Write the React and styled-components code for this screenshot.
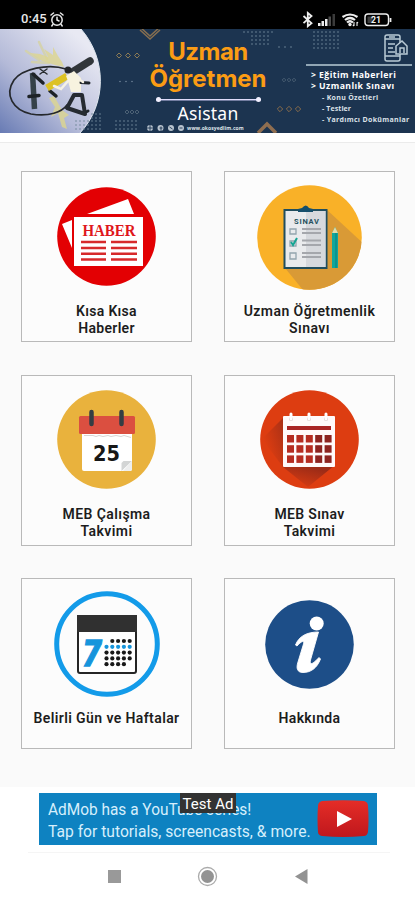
import React from "react";
import styled, { createGlobalStyle } from "styled-components";

const GlobalStyle = createGlobalStyle`
  * { box-sizing: border-box; }
  body { margin: 0; background: #fff; font-family: Roboto, "Noto Sans", sans-serif; }
  svg { display: block; }
`;

const Screen = styled.div`
  width: 415px;
  height: 900px;
  display: flex;
  flex-direction: column;
  background: #fff;
  overflow: hidden;
`;

const StatusBar = styled.header`
  height: 29px;
  flex: none;
  display: flex;
  justify-content: space-between;
  padding: 9px 22px 0 21px;
  background: #000;
  color: #e8e8e8;
`;

const StatusGroup = styled.div`
  display: flex;
  height: 20px;
  align-items: center;
  gap: ${(p) => p.$gap}px;
`;

const Clock = styled.span`
  font-size: 13px;
  line-height: 20px;
  font-weight: 500;
  letter-spacing: 0.05px;
`;

const Banner = styled.section`
  position: relative;
  height: 104px;
  flex: none;
  display: grid;
  grid-template-columns: 148px 120px 1fr;
  background: #1c3450;
  color: #fff;
  overflow: hidden;
`;

const BannerArt = styled.svg`
  position: absolute;
  inset: 0;
`;

const BrandColumn = styled.div`
  position: relative;
  grid-column: 2;
  display: flex;
  flex-direction: column;
  align-items: center;
  padding-top: 9px;
  font-family: Inter, sans-serif;
`;

const BrandLine = styled.div`
  font-size: 24px;
  line-height: 27px;
  font-weight: 700;
  color: #fb9c14;
  white-space: nowrap;
  letter-spacing: ${(p) => p.$spacing}px;
`;

const BrandRule = styled.div`
  display: flex;
  width: 105px;
  height: 5px;
  margin-top: 5px;
  align-items: center;
  justify-content: space-between;
  background: linear-gradient(#e8e5ff, #c9c6f0) center / 100% 1.5px no-repeat;
  &::before, &::after {
    content: "";
    width: 5px;
    height: 5px;
    border-radius: 50%;
    background: #f2f0ff;
  }
`;

const BrandSub = styled.div`
  margin-top: 1px;
  font: 400 17.5px/20px "Noto Sans", sans-serif;
  letter-spacing: 0.2px;
`;

const SiteRow = styled.div`
  display: flex;
  align-self: flex-start;
  align-items: center;
  gap: 3px;
  height: 8px;
  margin-top: 1px;
  margin-left: -2px;
  font: 700 5px/8px "Open Sans", sans-serif;
  color: #dfe5ea;
`;

const SiteName = styled.span`
  white-space: nowrap;
  letter-spacing: 0.1px;
`;

const Topics = styled.div`
  position: relative;
  display: flex;
  flex-direction: column;
  margin-left: 38px;
  margin-top: 34.5px;
  padding: 4px 0 0 5px;
  border-top: 2px solid #91a6b5;
  margin-right: 3px;
  height: 68px;
  font-family: "Open Sans", sans-serif;
  font-weight: 700;
  white-space: nowrap;
`;

const Topic = styled.div`
  font-size: 8.7px;
  line-height: 11px;
  letter-spacing: ${(p) => p.$spacing}px;
`;

const SubTopic = styled.div`
  font-size: 7px;
  line-height: 11px;
  padding-left: 11px;
  letter-spacing: ${(p) => p.$spacing}px;
  color: #dce2e8;
`;

const Divider = styled.div`
  height: 10px;
  flex: none;
  border-bottom: 1.5px solid #ebebeb;
  background: #fff;
`;

const Menu = styled.main`
  flex: none;
  height: 644px;
  display: grid;
  grid-template-columns: 171px 171px;
  grid-auto-rows: 171px;
  gap: 32.5px 32px;
  padding: 28px 0 0 21px;
  background: #fafafa;
`;

const Card = styled.article`
  display: flex;
  flex-direction: column;
  align-items: center;
  border: 1px solid #b9b9b9;
  background: #fcfcfc;
  svg { margin-top: ${(p) => p.$iconTop}px; }
`;

const CardLabel = styled.h2`
  margin: ${(p) => p.$top}px 0 0;
  font-size: 14px;
  line-height: 17px;
  font-weight: 600;
  letter-spacing: ${(p) => p.$spacing}px;
  text-align: center;
  white-space: pre-line;
  color: #1d1d1d;
`;

const AdArea = styled.aside`
  height: 65px;
  flex: none;
  display: flex;
  justify-content: center;
  padding: 6px 0 0 1px;
  background: #fff;
`;

const Ad = styled.div`
  position: relative;
  display: flex;
  justify-content: space-between;
  width: 338px;
  height: 52px;
  padding: 7px 8px 0 9px;
  background: #0e82c1;
`;

const AdText = styled.div`
  width: 263px;
  margin-top: -2.5px;
  font-family: Roboto, sans-serif;
  font-size: 17px;
  line-height: 22.5px;
  color: #d6effc;
  white-space: nowrap;
`;

const AdLine = styled.div`
  transform: scaleX(${(p) => p.$stretch});
  transform-origin: left;
`;

const TestTag = styled.span`
  position: absolute;
  left: 141px;
  top: 0;
  width: 56px;
  height: 20px;
  background: #333;
  color: #fff;
  font-size: 15px;
  line-height: 22px;
  text-align: center;
  white-space: nowrap;
`;

const NavBar = styled.nav`
  height: 49px;
  flex: none;
  display: grid;
  grid-template-columns: 13px 21px 13px;
  column-gap: 76.5px;
  justify-content: start;
  align-items: center;
  padding-left: 107.5px;
  margin: 0;
  background: linear-gradient(#f5f5f5, #f5f5f5) 28px 0 / 362px 1px no-repeat #fff;
`;

function AlarmIcon() {
  return (
    <svg width="14" height="15" viewBox="0 0 14 15" fill="none" stroke="#e8e8e8" strokeWidth="1.5" strokeLinecap="round">
      <circle cx="7" cy="8" r="5.2" />
      <path d="M7 5.200V8l2 1M1 3l2.500-2M13 3l-2.500-2M2.800 12.500l-1 1.500M11.200 12.500l1 1.500" />
    </svg>
  );
}

function StatusIcons() {
  return (
    <svg width="91" height="17" viewBox="302 10 91 17" fill="none" stroke="#eee" strokeWidth="1.4">
      <path strokeWidth="1.800" d="M303.500 15l8 7.200-3.700 3V12l3.700 3-8 7.200" />
      <g stroke="none" fill="#eee">
        <rect x="318" y="22" width="2.500" height="3" />
        <rect x="321.500" y="20" width="2.500" height="5" />
        <rect x="325" y="18" width="2.500" height="7" />
        <rect x="328.500" y="15.500" width="2.500" height="9.500" fill="#4c4c4c" />
        <rect x="332.500" y="13" width="2.500" height="12" fill="#3b3b3b" />
        <circle cx="350" cy="23.500" r="1.700" />
      </g>
      <path strokeWidth="2.200" d="M342.500 16q7.500-5 15 0M345 19q5-4 10 0M347 21.500q3-2.500 6 0" />
      <path strokeWidth="1.100" d="M354 21v4M352.800 23.800l1.200 1.200M357 25v-4M358 22.200l-1-1.200" />
      <rect x="365" y="13" width="23.500" height="11.500" rx="3" />
      <rect x="367.500" y="15.500" width="5" height="6.500" fill="#3d3d3d" stroke="none" />
      <path d="M390.500 17v4" strokeWidth="1.800" />
      <text x="371" y="22.200" fill="#f4f4f4" stroke="none" fontSize="9" fontWeight="700" textLength="10" lengthAdjust="spacingAndGlyphs">21</text>
    </svg>
  );
}

function Dots({ x, y, cols, rows, dx = 4, dy = 4, color = "#71869a" }) {
  return Array.from({ length: cols * rows }, (_, i) => (
    <circle key={i} cx={x + (i % cols) * dx} cy={y + Math.floor(i / cols) * dy} r="0.8" fill={color} />
  ));
}

function Diamonds({ x, y, step, size, color }) {
  return [0, 1, 2].map((i) => (
    <path key={i} d={`M${x + i * step} ${y - size}l${size} ${size}l${-size} ${size}l${-size} ${-size}z`} fill="none" stroke={color} strokeWidth="0.9" />
  ));
}

function BannerDrawing() {
  return (
    <BannerArt width="415" height="104" viewBox="0 29 415 104">
      <defs>
        <linearGradient id="moon" x1="0" y1="1" x2="0.8" y2="0.1">
          <stop offset="0" stopColor="#687bb4" />
          <stop offset="0.45" stopColor="#b4bad8" />
          <stop offset="1" stopColor="#e8e9f3" />
        </linearGradient>
      </defs>
      <path d="M0 29H81C107 59 107 104 80 133H0z" fill="url(#moon)" />
      <path d="M81 29C107 59 107 104 80 133" fill="none" stroke="#e0e7ef" strokeWidth="1" />
      <g fill="none" strokeLinecap="round">
        <path stroke="#d4d2a3" strokeWidth="2.500" opacity="0.8" d="M26 51l13 9M39 42l8 17M32 62l17 1" />
        <path fill="#ddd68e" opacity="0.8" d="M53 47l5 9 4 6 2 5-9-2-13-4-12-8 10 1 8 3-4-8 9 6zM49 98l6 9-4 10 7-4 4 14 5 2-3-11 5-3-7-5-8-14z" />
        <path stroke="#25282c" strokeWidth="1.700" d="M66 69C48 63 22 69 14 80C4 95 13 110 31 114C49 117 62 112 67 105" />
        <path stroke="#354149" strokeWidth="5.500" strokeLinecap="butt" d="M32.500 73l2 36" />
        <path stroke="#1d2227" strokeWidth="3.500" d="M33 74l10 9M50 91l6 5M29 96.500l10-1" />
        <path stroke="#272b2f" strokeWidth="1.500" d="M40 69l7 5M47 69l-7 5" />
        <path stroke="#ddc224" strokeWidth="7" strokeLinecap="butt" d="M47 88l20-12" />
        <path stroke="#31363a" strokeWidth="7.500" d="M74 71l16-10" />
        <path fill="#f7f3df" d="M66 76l8-5 7 7 0 14h-10l-3-11z" />
        <circle cx="68" cy="70" r="3.500" fill="#24272a" stroke="none" />
        <path stroke="#262b31" strokeWidth="4" strokeLinejoin="round" d="M74 95l-7 13 18 6-3-19z" />
        <path stroke="#20252b" strokeWidth="3" d="M81 82.500l8 .500M87 111.500l1-.500" />
        <path stroke="#f6f2e4" strokeWidth="2.500" d="M54 86l7 3 7-8M77 78l6 4" />
      </g>
      <path d="M140 30l10 9 10-9M140 27l10 9 10-9" fill="none" stroke="#876f50" strokeWidth="1.500" />
      <path d="M258 133l9-9 9 9" fill="none" stroke="#8f6e50" strokeWidth="3.500" />
      <Diamonds x={119} y={55.500} step={9} size={2.500} color="#9b8355" />
      <Diamonds x={280} y={109} step={9} size={2.700} color="#92714a" />
      <Diamonds x={127} y={112} step={5} size={2} color="#526779" />
      <Diamonds x={284} y={80} step={5} size={1.800} color="#4c6175" />
      <Dots x={120} y={81.500} cols={3} rows={1} dx={6} />
      <Dots x={279} y={47} cols={3} rows={1} dx={6} />
      <Dots x={244} y={32} cols={8} rows={1} />
      <Dots x={252} y={36} cols={5} rows={3} />
      <Dots x={314} y={32} cols={7} rows={5} />
      <Dots x={116} y={121} cols={6} rows={3} />
      <Dots x={76} y={121} cols={7} rows={3} />
      <Dots x={92} y={114} cols={3} rows={2} />
      <g fill="none" stroke="#b9cad5" strokeWidth="1.500">
        <rect x="385" y="35" width="15" height="26" rx="2" />
        <path d="M385 39h15M385 56h15M388 44h7M388 48h5M388 52h7M389 37h6" />
        <path fill="#1c3450" d="M396 46l6-5 5 5v8h-11z" />
        <path d="M400 53v-5h4v5" />
      </g>
    </BannerArt>
  );
}

function SocialIcons() {
  return (
    <svg width="38" height="8" viewBox="0 0 38 8" fill="#b9c4cf">
      {[4, 14.5, 25, 35].map((x) => <circle key={x} cx={x} cy="4" r="3" />)}
      <path d="M4 1v6M1 4h6M15 2.500v4.500M13.500 4h3M23.500 3l3 2M33.500 4h3" stroke="#1c3450" strokeWidth="0.9" />
    </svg>
  );
}

function NewsIcon() {
  return (
    <svg width="99" height="99" viewBox="0 0 99 99">
      <circle cx="49.500" cy="49.500" r="49.300" fill="#e30003" />
      <path fill="#fff" d="M30 27L71 12l6 15zM5 37l10-4v28z" />
      <rect x="17" y="30" width="69" height="49" fill="#fff" />
      <text x="25.500" y="48.500" fill="#df171c" fontFamily="Liberation Serif, serif" fontSize="16" fontWeight="700" textLength="53" lengthAdjust="spacingAndGlyphs">HABER</text>
      <path d="M24 55h25M54 55h26M24 61h25M54 61h26M24 66.700h25M54 66.700h26M24 72.500h25M54 72.500h26" stroke="#d72a2b" strokeWidth="2.500" />
    </svg>
  );
}

function ExamIcon() {
  return (
    <svg width="105" height="105" viewBox="0 0 105 105">
      <defs><clipPath id="exam"><circle cx="52.500" cy="52.500" r="52.300" /></clipPath></defs>
      <circle cx="52.500" cy="52.500" r="52.300" fill="#f9b128" />
      <path clipPath="url(#exam)" d="M69 24l40 37v44H46L28 83z" fill="#d99a36" />
      <rect x="27.500" y="25" width="42" height="58" fill="#e9ebed" stroke="#214e5e" strokeWidth="2" />
      <path d="M49 26h19.500v56H49z" fill="#d6d9dd" />
      <path d="M41 27v-3l4-1q4-5 7 0l4 1v3z" fill="#154f6c" />
      <text x="37" y="39" fill="#255260" fontSize="7.500" fontWeight="700" textLength="25" lengthAdjust="spacing">SINAV</text>
      <g fill="none" stroke="#93a5ad" strokeWidth="1.300">
        <path d="M33 44h6v5h-6zM33 56h6v5h-6zM33 68h6v6h-6z" />
        <path stroke="#a4a7ac" strokeWidth="2" d="M45 44h19M45 48h19M45 55.500h19M45 60h19M45 68h19M45 72h19" />
        <path stroke="#16a493" strokeWidth="2" d="M34 57l2 3 4-7" />
      </g>
      <path d="M75 48l3-6 3 6v35h-6z" fill="#10a79b" />
      <path d="M75 48l3-6 3 6z" fill="#e1dba9" />
      <path d="M79 48v35" stroke="#087f83" strokeWidth="1" />
    </svg>
  );
}

function WorkCalendarIcon() {
  return (
    <svg width="99" height="99" viewBox="0 0 99 99">
      <circle cx="49.500" cy="49.500" r="49.300" fill="#e9b23d" />
      <rect x="25" y="35" width="50" height="46" rx="2" fill="#fff" />
      <rect x="22" y="26" width="56" height="18" rx="1.500" fill="#db4f40" />
      <path d="M27 45.500h9l3 1 3-1 4 1 5-1 3 1 5-1 5 1 3-1 7 2" stroke="#d8d5d2" fill="none" />
      <path d="M34.500 22v12M64.500 22v12" stroke="#343d43" strokeWidth="4.500" strokeLinecap="round" />
      <text x="36" y="70.500" fill="#171717" fontFamily="DejaVu Sans, sans-serif" fontSize="22" fontWeight="700" textLength="27" lengthAdjust="spacingAndGlyphs">25</text>
      <path d="M64.500 81v-8l2-2H75z" fill="#d3d5d5" /><path d="M66 81l9-10v8q0 2-2 2z" fill="#edeeee" />
    </svg>
  );
}

function ExamCalendarIcon() {
  const cells = Array.from({ length: 15 }, (_, i) => i);
  return (
    <svg width="99" height="99" viewBox="0 0 99 99">
      <defs>
        <clipPath id="round"><circle cx="49.500" cy="49.500" r="49.300" /></clipPath>
        <linearGradient id="shade" x1="0.650" y1="0.300" x2="0.300" y2="1">
          <stop stopColor="#9b2b17" /><stop offset="1" stopColor="#d83c12" />
        </linearGradient>
        <linearGradient id="shadeLeft" x1="1" y1="0" x2="0.200" y2="0.600">
          <stop stopColor="#a93016" /><stop offset="1" stopColor="#dd3d11" />
        </linearGradient>
      </defs>
      <circle cx="49.500" cy="49.500" r="49.300" fill="#dd3d11" />
      <path clipPath="url(#round)" d="M23 28L2 49l21 28z" fill="url(#shadeLeft)" />
      <path clipPath="url(#round)" d="M23 77l25 20 27-22V70z" fill="url(#shade)" />
      <rect x="23" y="26" width="52" height="51" rx="1" fill="#fffafa" />
      <rect x="27" y="36" width="44" height="4" fill="#a92524" />
      {cells.map((i) => <rect key={i} x={27 + (i % 5) * 9.4} y={45 + Math.floor(i / 5) * 10.2} width="7" height="7.500" fill={i % 5 > 2 ? "#8d2420" : "#b52d21"} />)}
      {[31, 49, 66].map((x) => <g key={x}><circle cx={x} cy="29" r="2" fill="#d7c4c3" /><path d={`M${x} 24v5`} stroke="#fff" strokeWidth="3" strokeLinecap="round" /></g>)}
    </svg>
  );
}

function WeekIcon() {
  const dots = Array.from({ length: 25 }, (_, i) => i).filter((i) => i !== 0 && i !== 24);
  return (
    <svg width="106" height="106" viewBox="0 0 106 106">
      <circle cx="53" cy="53" r="50.300" fill="#fcfcfc" stroke="#139be9" strokeWidth="5" />
      <rect x="24" y="25" width="58" height="57" rx="2" fill="#fff" stroke="#252525" strokeWidth="2" />
      <path d="M23 24h60v17H23z" fill="#303030" />
      <text x="28" y="74.500" fill="#1695dc" stroke="#1695dc" strokeWidth="1.3" fontFamily="DejaVu Sans, sans-serif" fontStyle="italic" fontWeight="700" fontSize="35" textLength="20" lengthAdjust="spacingAndGlyphs">7</text>
      {dots.map((i) => <circle key={i} cx={52.5 + (i % 5) * 5.8} cy={50 + Math.floor(i / 5) * 5.8} r="2.100" fill={Math.floor(i / 5) === 1 ? "#1695dc" : "#191919"} />)}
    </svg>
  );
}

function InfoIcon() {
  return (
    <svg width="89" height="89" viewBox="0 0 89 89">
      <circle cx="44.500" cy="44.500" r="44.300" fill="#1d4e88" />
      <circle cx="51.700" cy="23.500" r="7" fill="#fff" />
      <path fill="#fff" d="M30.500 45C34 36 42 32 53.500 32L45.500 60C44.500 66 48 64 54 57.500L55.500 59C52 68 46 72.500 38 72.500C32 72.500 31 68 33 62L38.500 44C39.500 40 36.500 41 32 46z" stroke="#fff" strokeWidth="0.9" strokeLinejoin="round" />
    </svg>
  );
}

const items = [
  { label: "Kısa Kısa\nHaberler", Icon: NewsIcon, iconTop: 14.5, top: 17.5, spacing: 0.3 },
  { label: "Uzman Öğretmenlik\nSınavı", Icon: ExamIcon, iconTop: 12.5, top: 13.5, spacing: 0.43 },
  { label: "MEB Çalışma\nTakvimi", Icon: WorkCalendarIcon, iconTop: 14.5, top: 17, spacing: 0.42 },
  { label: "MEB Sınav\nTakvimi", Icon: ExamCalendarIcon, iconTop: 14, top: 17.5, spacing: 0.35 },
  { label: "Belirli Gün ve Haftalar", Icon: WeekIcon, iconTop: 12, top: 12.5, spacing: 0.4 },
  { label: "Hakkında", Icon: InfoIcon, iconTop: 21, top: 20.5, spacing: 0.35 },
];

function MenuCard({ item }) {
  const { Icon } = item;
  return (
    <Card $iconTop={item.iconTop}>
      <Icon />
      <CardLabel $top={item.top} $spacing={item.spacing}>{item.label}</CardLabel>
    </Card>
  );
}

export default function App() {
  return (
    <Screen>
      <GlobalStyle />
      <StatusBar>
        <StatusGroup $gap={3}><Clock>0:45</Clock><AlarmIcon /></StatusGroup>
        <StatusGroup $gap={0}><StatusIcons /></StatusGroup>
      </StatusBar>
      <Banner>
        <BannerDrawing />
        <BrandColumn>
          <BrandLine $spacing={-0.5}>Uzman</BrandLine>
          <BrandLine $spacing={0}>Öğretmen</BrandLine>
          <BrandRule />
          <BrandSub>Asistan</BrandSub>
          <SiteRow><SocialIcons /><SiteName>www.okosyedlim.com</SiteName></SiteRow>
        </BrandColumn>
        <Topics>
          <Topic $spacing={0.42}>&gt; Eğitim Haberleri</Topic>
          <Topic $spacing={0.42}>&gt; Uzmanlık Sınavı</Topic>
          <SubTopic $spacing={0.3}>- Konu Özetleri</SubTopic>
          <SubTopic $spacing={0.1}>- Testler</SubTopic>
          <SubTopic $spacing={0.33}>- Yardımcı Dokümanlar</SubTopic>
        </Topics>
      </Banner>
      <Divider />
      <Menu>{items.map((item) => <MenuCard key={item.label} item={item} />)}</Menu>
      <AdArea>
        <Ad>
          <AdText>
            <AdLine $stretch={0.907}>AdMob has a YouTube series!</AdLine>
            <AdLine $stretch={0.92}>Tap for tutorials, screencasts, &amp; more.</AdLine>
          </AdText>
          <svg width="52" height="38" viewBox="0 0 52 38">
            <defs><linearGradient id="play" x2="0" y2="1"><stop stopColor="#e52d27" /><stop offset="1" stopColor="#bf171d" /></linearGradient></defs>
            <path d="M5 1Q26-.500 47 1q4 1 4 5 1 13 0 26-1 4-4 4-21 2-42 0-4-1-4-4-1-13 0-26 0-4 4-5z" fill="url(#play)" />
            <path d="M20 11l15 8-15 8z" fill="#fff" />
          </svg>
          <TestTag>Test Ad</TestTag>
        </Ad>
      </AdArea>
      <NavBar>
        <svg width="13" height="13"><rect width="13" height="13" fill="#999" /></svg>
        <svg width="21" height="21" viewBox="0 0 21 21"><circle cx="10.500" cy="10.500" r="9" fill="none" stroke="#aaa" strokeWidth="1.300" /><circle cx="10.500" cy="10.500" r="6.500" fill="#939393" /></svg>
        <svg width="13" height="15" viewBox="0 0 13 15"><path d="M0 7.500L12.500 0v15z" fill="#929292" /></svg>
      </NavBar>
    </Screen>
  );
}
